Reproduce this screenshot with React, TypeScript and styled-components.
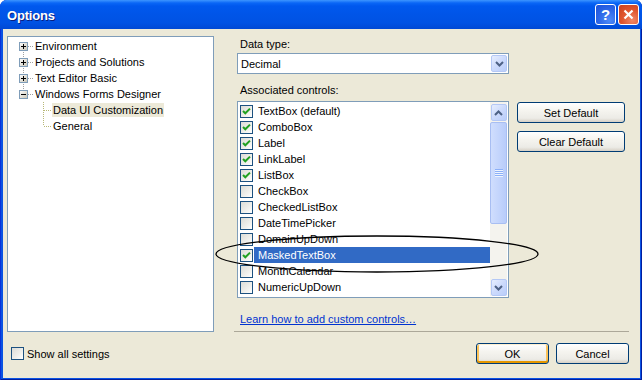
import React from 'react';
import styled, { createGlobalStyle, css } from 'styled-components';

const Global = createGlobalStyle`
  html, body { margin: 0; padding: 0; background: #ffffff; }
  body { font-family: "Liberation Sans", Arial, sans-serif; font-size: 11px; color: #000; }
  * { box-sizing: border-box; }
`;

const Window = styled.div`
  position: relative;
  width: 642px;
  height: 380px;
  display: flex;
  flex-direction: column;
  background: #0A52E2;
  box-shadow: inset 1px 0 0 #0831D9, inset -1px 0 0 #001EA0, inset 0 -1px 0 #001EA0;
  border-radius: 7px 7px 0 0;
  overflow: hidden;
`;

const TitleBar = styled.div`
  height: 29px;
  flex: none;
  display: flex;
  align-items: center;
  padding: 0 3px 0 7px;
  gap: 2px;
  background: linear-gradient(180deg, #3D95FF 0px, #0A66F6 3px, #0058EE 6px, #0055E8 14px, #0052E3 23px, #0049D4 29px);
`;

const Title = styled.div`
  flex: 1;
  color: #fff;
  font-weight: bold;
  font-size: 13px;
  letter-spacing: -0.2px;
  text-shadow: 1px 1px 0 #0A1E7E;
  padding-top: 1px;
`;

const CaptionButton = styled.div<{ $variant: 'help' | 'close' }>`
  width: 21px;
  height: 21px;
  border: 1px solid #fff;
  border-radius: 3px;
  display: flex;
  align-items: center;
  justify-content: center;
  color: #fff;
  font-weight: bold;
  font-size: 15px;
  ${(p) =>
    p.$variant === 'help'
      ? css`
          background: radial-gradient(circle at 70% 80%, #4D8AF8 0%, #2E68E8 50%, #1B50D8 100%);
        `
      : css`
          background: radial-gradient(circle at 70% 80%, #F08868 0%, #E0552E 50%, #C8401E 100%);
        `}
`;

const Client = styled.div`
  flex: 1;
  margin: 0 2px 2px 3px;
  background: #ECE9D8;
  display: flex;
  flex-direction: column;
  padding: 7px 11px 0 4px;
`;

const MainRow = styled.div`
  display: flex;
  height: 296px;
  gap: 20px;
`;

const Tree = styled.div`
  width: 207px;
  flex: none;
  border: 1px solid #7F9DB9;
  background: #fff;
  padding-top: 1px;
  display: flex;
  flex-direction: column;
`;

const TreeRow = styled.div`
  height: 16px;
  display: flex;
  align-items: center;
`;

const TreeLabel = styled.span<{ $selected?: boolean }>`
  line-height: 14px;
  padding: 0 1px;
  white-space: nowrap;
  background: ${(p) => (p.$selected ? '#ECE9D8' : 'transparent')};
`;

const RightCol = styled.div`
  flex: 1;
  display: flex;
  flex-direction: column;
`;

const FieldLabel = styled.div<{ $gap?: number }>`
  line-height: 16px;
  height: 16px;
  padding-left: 6px;
  margin-top: ${(p) => p.$gap ?? 0}px;
`;

const Combo = styled.div`
  margin: 1px 0 0 3px;
  width: 272px;
  height: 21px;
  border: 1px solid #7F9DB9;
  background: #fff;
  padding: 1px;
  display: flex;
  align-items: center;
`;

const ComboText = styled.div`
  flex: 1;
  padding-left: 2px;
`;

const ScrollButton = styled.div`
  width: 16px;
  height: 17px;
  flex: none;
  border: 1px solid #B4C8F6;
  border-radius: 2px;
  background: linear-gradient(135deg, #E6EEFE 0%, #CCDAFC 50%, #B9CDFA 100%);
  display: flex;
  align-items: center;
  justify-content: center;
`;

const ListRow = styled.div`
  display: flex;
  align-items: flex-start;
  margin: 3px 0 0 3px;
`;

const List = styled.div`
  width: 272px;
  height: 197px;
  flex: none;
  border: 1px solid #7F9DB9;
  background: #fff;
  padding: 0 1px 1px 1px;
  display: flex;
`;

const Items = styled.div`
  flex: 1;
  display: flex;
  flex-direction: column;
  padding-top: 1px;
`;

const Item = styled.div`
  height: 16px;
  display: flex;
  align-items: center;
  padding-left: 1px;
`;

const ItemLabel = styled.span<{ $selected?: boolean }>`
  flex: 1;
  margin-left: 1px;
  padding-left: 4px;
  line-height: 16px;
  white-space: nowrap;
  color: ${(p) => (p.$selected ? '#fff' : '#000')};
  background: ${(p) => (p.$selected ? '#316AC5' : 'transparent')};
`;

const Box = styled.span`
  width: 13px;
  height: 13px;
  flex: none;
  border: 1px solid #1C5180;
  background: linear-gradient(135deg, #DCDCD7 0%, #EEEEEA 55%, #FFFFFF 100%);
  display: flex;
  align-items: center;
  justify-content: center;
`;

const ScrollBar = styled.div`
  width: 17px;
  flex: none;
  display: flex;
  flex-direction: column;
  padding-top: 2px;
  background: #F4F3EE;
`;

const ScrollBtnWrap = styled.div`
  width: 17px;
  height: 17px;
  display: flex;
  align-items: center;
  justify-content: center;
`;

const Thumb = styled.div`
  margin: 1px 0 0 0;
  width: 17px;
  height: 102px;
  border: 1px solid #A8BEF2;
  border-radius: 2px;
  background: linear-gradient(90deg, #D0DEFD 0%, #C4D5FC 50%, #B8CCFA 100%);
  display: flex;
  align-items: center;
  justify-content: center;
`;

const ScrollFill = styled.div`
  flex: 1;
`;

const ButtonCol = styled.div`
  display: flex;
  flex-direction: column;
  gap: 8px;
  margin-left: 8px;
  padding-top: 1px;
`;

const XPButton = styled.button<{ $w: number; $default?: boolean }>`
  width: ${(p) => p.$w}px;
  height: 21px;
  padding: 0;
  border: 1px solid #003C74;
  border-radius: 3px;
  font-family: "Liberation Sans", Arial, sans-serif;
  font-size: 11px;
  color: #000;
  background: linear-gradient(180deg, #FFFFFF 0%, #F5F4EF 40%, #ECEBE6 80%, #D6D0C5 100%);
  ${(p) =>
    p.$default &&
    css`
      box-shadow: inset 0 1px 0 #FFF0CF, inset 0 -2px 0 #E59700, inset 2px 0 0 #FBC35A, inset -2px 0 0 #FBC35A;
    `}
`;

const Link = styled.div`
  margin-top: 14px;
  padding-left: 6px;
  line-height: 14px;
  color: #0033D0;
  text-decoration: underline;
`;

const Separator = styled.div`
  margin-top: auto;
  height: 1px;
  background: #ACA899;
`;

const BottomRow = styled.div`
  margin-top: 11px;
  height: 21px;
  display: flex;
  align-items: center;
  gap: 7px;
`;

const ShowAll = styled.label`
  flex: 1;
  display: flex;
  align-items: center;
  gap: 3px;
  margin-left: 4px;
`;

const PlainBox = styled.span`
  width: 13px;
  height: 13px;
  border: 1px solid #1C5180;
  background: linear-gradient(135deg, #DCDCD7 0%, #EEEEEA 55%, #FFFFFF 100%);
`;

const Overlay = styled.svg`
  position: absolute;
  left: 0;
  top: 0;
  pointer-events: none;
`;

const Check = () => (
  <svg width="9" height="9" viewBox="0 0 9 9">
    <path d="M1 4 L3.3 6.3 L8 1.6" fill="none" stroke="#21A121" strokeWidth="2" />
  </svg>
);

const Chevron = ({ up }: { up?: boolean }) => (
  <svg width="9" height="6" viewBox="0 0 9 6">
    <path
      d={up ? 'M1 5 L4.5 1.5 L8 5' : 'M1 1 L4.5 4.5 L8 1'}
      fill="none"
      stroke="#4D6185"
      strokeWidth="2"
    />
  </svg>
);

type Pos = 'first' | 'mid' | 'last';

const TopConnector = ({ pos, expanded }: { pos: Pos; expanded?: boolean }) => (
  <svg width="26" height="16" viewBox="0 0 26 16">
    <line
      x1="15.5"
      x2="15.5"
      y1={pos === 'first' ? 8 : 0}
      y2={pos === 'last' ? 8 : 16}
      stroke="#A0A0A0"
      strokeDasharray="1 1"
    />
    <line x1="20" x2="26" y1="8.5" y2="8.5" stroke="#A0A0A0" strokeDasharray="1 1" />
    <defs>
      <linearGradient id="bx" x1="0" y1="0" x2="1" y2="1">
        <stop offset="0" stopColor="#FFFFFF" />
        <stop offset="1" stopColor="#C8C4B4" />
      </linearGradient>
    </defs>
    <rect x="11.5" y="4.5" width="8" height="8" fill="url(#bx)" stroke="#7F9DB9" />
    <line x1="13" x2="18" y1="8.5" y2="8.5" stroke="#000" />
    {!expanded && <line x1="15.5" x2="15.5" y1="6" y2="11" stroke="#000" />}
  </svg>
);

const ChildConnector = ({ last }: { last?: boolean }) => (
  <svg width="44" height="16" viewBox="0 0 44 16">
    <line x1="35.5" x2="35.5" y1="0" y2={last ? 8 : 16} stroke="#B8B878" strokeDasharray="1 1" />
    <line x1="36" x2="44" y1="8.5" y2="8.5" stroke="#B8B878" strokeDasharray="1 1" />
  </svg>
);

const controls: { name: string; checked: boolean }[] = [
  { name: 'TextBox (default)', checked: true },
  { name: 'ComboBox', checked: true },
  { name: 'Label', checked: true },
  { name: 'LinkLabel', checked: true },
  { name: 'ListBox', checked: true },
  { name: 'CheckBox', checked: false },
  { name: 'CheckedListBox', checked: false },
  { name: 'DateTimePicker', checked: false },
  { name: 'DomainUpDown', checked: false },
  { name: 'MaskedTextBox', checked: true },
  { name: 'MonthCalendar', checked: false },
  { name: 'NumericUpDown', checked: false },
];

export default function App() {
  return (
    <>
      <Global />
      <Window>
        <TitleBar>
          <Title>Options</Title>
          <CaptionButton $variant="help">?</CaptionButton>
          <CaptionButton $variant="close">
            <svg width="11" height="11" viewBox="0 0 11 11">
              <path d="M1.5 1.5 L9.5 9.5 M9.5 1.5 L1.5 9.5" stroke="#fff" strokeWidth="2.2" />
            </svg>
          </CaptionButton>
        </TitleBar>
        <Client>
          <MainRow>
            <Tree>
              <TreeRow>
                <TopConnector pos="first" />
                <TreeLabel>Environment</TreeLabel>
              </TreeRow>
              <TreeRow>
                <TopConnector pos="mid" />
                <TreeLabel>Projects and Solutions</TreeLabel>
              </TreeRow>
              <TreeRow>
                <TopConnector pos="mid" />
                <TreeLabel>Text Editor Basic</TreeLabel>
              </TreeRow>
              <TreeRow>
                <TopConnector pos="last" expanded />
                <TreeLabel>Windows Forms Designer</TreeLabel>
              </TreeRow>
              <TreeRow>
                <ChildConnector />
                <TreeLabel $selected>Data UI Customization</TreeLabel>
              </TreeRow>
              <TreeRow>
                <ChildConnector last />
                <TreeLabel>General</TreeLabel>
              </TreeRow>
            </Tree>
            <RightCol>
              <FieldLabel>Data type:</FieldLabel>
              <Combo>
                <ComboText>Decimal</ComboText>
                <ScrollButton>
                  <Chevron />
                </ScrollButton>
              </Combo>
              <FieldLabel $gap={8}>Associated controls:</FieldLabel>
              <ListRow>
                <List>
                  <Items>
                    {controls.map((c) => (
                      <Item key={c.name}>
                        <Box>{c.checked && <Check />}</Box>
                        <ItemLabel $selected={c.name === 'MaskedTextBox'}>{c.name}</ItemLabel>
                      </Item>
                    ))}
                  </Items>
                  <ScrollBar>
                    <ScrollBtnWrap>
                      <ScrollButton>
                        <Chevron up />
                      </ScrollButton>
                    </ScrollBtnWrap>
                    <Thumb>
                      <svg width="8" height="8" viewBox="0 0 8 8">
                        {[0.5, 2.5, 4.5, 6.5].map((y) => (
                          <line key={y} x1="0" x2="8" y1={y} y2={y} stroke="#8CB0F8" />
                        ))}
                        {[1.5, 3.5, 5.5, 7.5].map((y) => (
                          <line key={y} x1="0" x2="8" y1={y} y2={y} stroke="#EEF4FE" />
                        ))}
                      </svg>
                    </Thumb>
                    <ScrollFill />
                    <ScrollBtnWrap>
                      <ScrollButton>
                        <Chevron />
                      </ScrollButton>
                    </ScrollBtnWrap>
                  </ScrollBar>
                </List>
                <ButtonCol>
                  <XPButton $w={108}>Set Default</XPButton>
                  <XPButton $w={108}>Clear Default</XPButton>
                </ButtonCol>
              </ListRow>
              <Link>Learn how to add custom controls…</Link>
              <Separator />
            </RightCol>
          </MainRow>
          <BottomRow>
            <ShowAll>
              <PlainBox />
              Show all settings
            </ShowAll>
            <XPButton $w={73} $default>
              OK
            </XPButton>
            <XPButton $w={73}>Cancel</XPButton>
          </BottomRow>
        </Client>
        <Overlay width="642" height="380" viewBox="0 0 642 380">
          <ellipse cx="377" cy="254" rx="161" ry="18" fill="none" stroke="#000" strokeWidth="1.3" />
        </Overlay>
      </Window>
    </>
  );
}
